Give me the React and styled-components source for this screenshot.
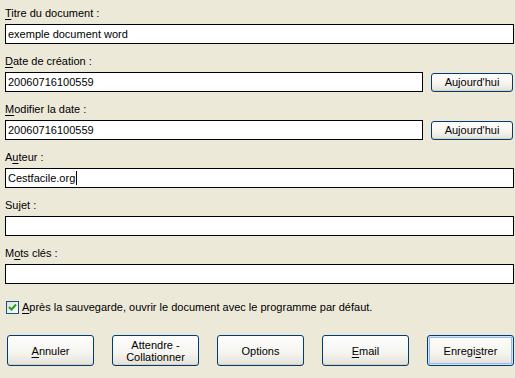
import styled, { createGlobalStyle } from "styled-components";

const GlobalStyle = createGlobalStyle`
  html, body {
    margin: 0;
    padding: 0;
    background: #ece9d8;
  }
  * {
    box-sizing: border-box;
  }
`

const Page = styled.div`
  width: 515px;
  height: 378px;
  padding: 6px 1px 0 5px;
  background: #ece9d8;
  font-family: "Liberation Sans", Arial, sans-serif;
  font-size: 11px;
  color: #000;
  overflow: hidden;
`

const Group = styled.div`
  display: flex;
  flex-direction: column;
  margin-bottom: 10px;
`

const Label = styled.div`
  height: 14px;
  line-height: 14px;
  margin-bottom: 4px;
`

const Key = styled.span`
  text-decoration: underline;
  text-underline-offset: 2px;
`

const Row = styled.div`
  display: flex;
  align-items: center;
  gap: 8px;
`

const TextBox = styled.div`
  width: ${props => props.width || "509px"};
  height: 20px;
  line-height: 18px;
  padding: 0 2px;
  border: 1px solid #000;
  background: #fff;
  white-space: nowrap;
`

const Caret = styled.span`
  display: inline-block;
  width: 1px;
  height: 14px;
  margin-left: 1px;
  vertical-align: -3px;
  background: #000;
`

const XpButton = styled.button`
  width: ${props => props.w}px;
  height: ${props => props.h}px;
  padding: 0;
  border: 1px solid #003c74;
  border-radius: 3px;
  background: linear-gradient(#ffffff 0%, #f4f3ee 60%, #e4e1d6 100%);
  box-shadow: ${props => props.primary
    ? "inset 0 0 0 1px #cee7ff, inset 0 0 0 2px #98b8ea"
    : "inset 0 -1px 0 #d6d0c5"};
  font-family: inherit;
  font-size: 11px;
  line-height: 12px;
  color: #000;
`

const CheckRow = styled.label`
  display: flex;
  align-items: center;
  gap: 3px;
  margin: 16px 0 0 1px;
  height: 14px;
`

const Box = styled.span`
  width: 13px;
  height: 13px;
  border: 1px solid #1c5180;
  background: linear-gradient(135deg, #dcdcd7, #ffffff);
  display: flex;
  align-items: center;
  justify-content: center;
`

const ButtonBar = styled.div`
  display: flex;
  gap: 18px;
  margin: 21px 0 0 2px;
`

function Field({ label, value, caret, width }) {
  return (
    <Group>
      <Label>{label}</Label>
      <TextBox width={width}>{value}{caret && <Caret />}</TextBox>
    </Group>
  )
}

function DateField({ label, value }) {
  return (
    <Group>
      <Label>{label}</Label>
      <Row>
        <TextBox width="418px">{value}</TextBox>
        <XpButton w={82} h={19}>Aujourd'hui</XpButton>
      </Row>
    </Group>
  )
}

export default function App() {
  return (
    <Page>
      <GlobalStyle />
      <Field label={<><Key>T</Key>itre du document :</>} value="exemple document word" />
      <DateField label={<><Key>D</Key>ate de création :</>} value="20060716100559" />
      <DateField label={<><Key>M</Key>odifier la date :</>} value="20060716100559" />
      <Field label={<>A<Key>u</Key>teur :</>} value="Cestfacile.org" caret />
      <Field label="Sujet :" value="" />
      <Field label={<>M<Key>o</Key>ts clés :</>} value="" />
      <CheckRow>
        <Box>
          <svg width="9" height="9" viewBox="0 0 9 9">
            <path d="M1 4 L3.5 6.5 L8 1.5" fill="none" stroke="#21a121" strokeWidth="2" />
          </svg>
        </Box>
        <span><Key>A</Key>près la sauvegarde, ouvrir le document avec le programme par défaut.</span>
      </CheckRow>
      <ButtonBar>
        <XpButton w={87} h={31}><Key>A</Key>nnuler</XpButton>
        <XpButton w={87} h={31}>Attendre -<br />Collationner</XpButton>
        <XpButton w={87} h={31}>Options</XpButton>
        <XpButton w={87} h={31}><Key>E</Key>mail</XpButton>
        <XpButton w={87} h={31} primary>Enregi<Key>s</Key>trer</XpButton>
      </ButtonBar>
    </Page>
  )
}
